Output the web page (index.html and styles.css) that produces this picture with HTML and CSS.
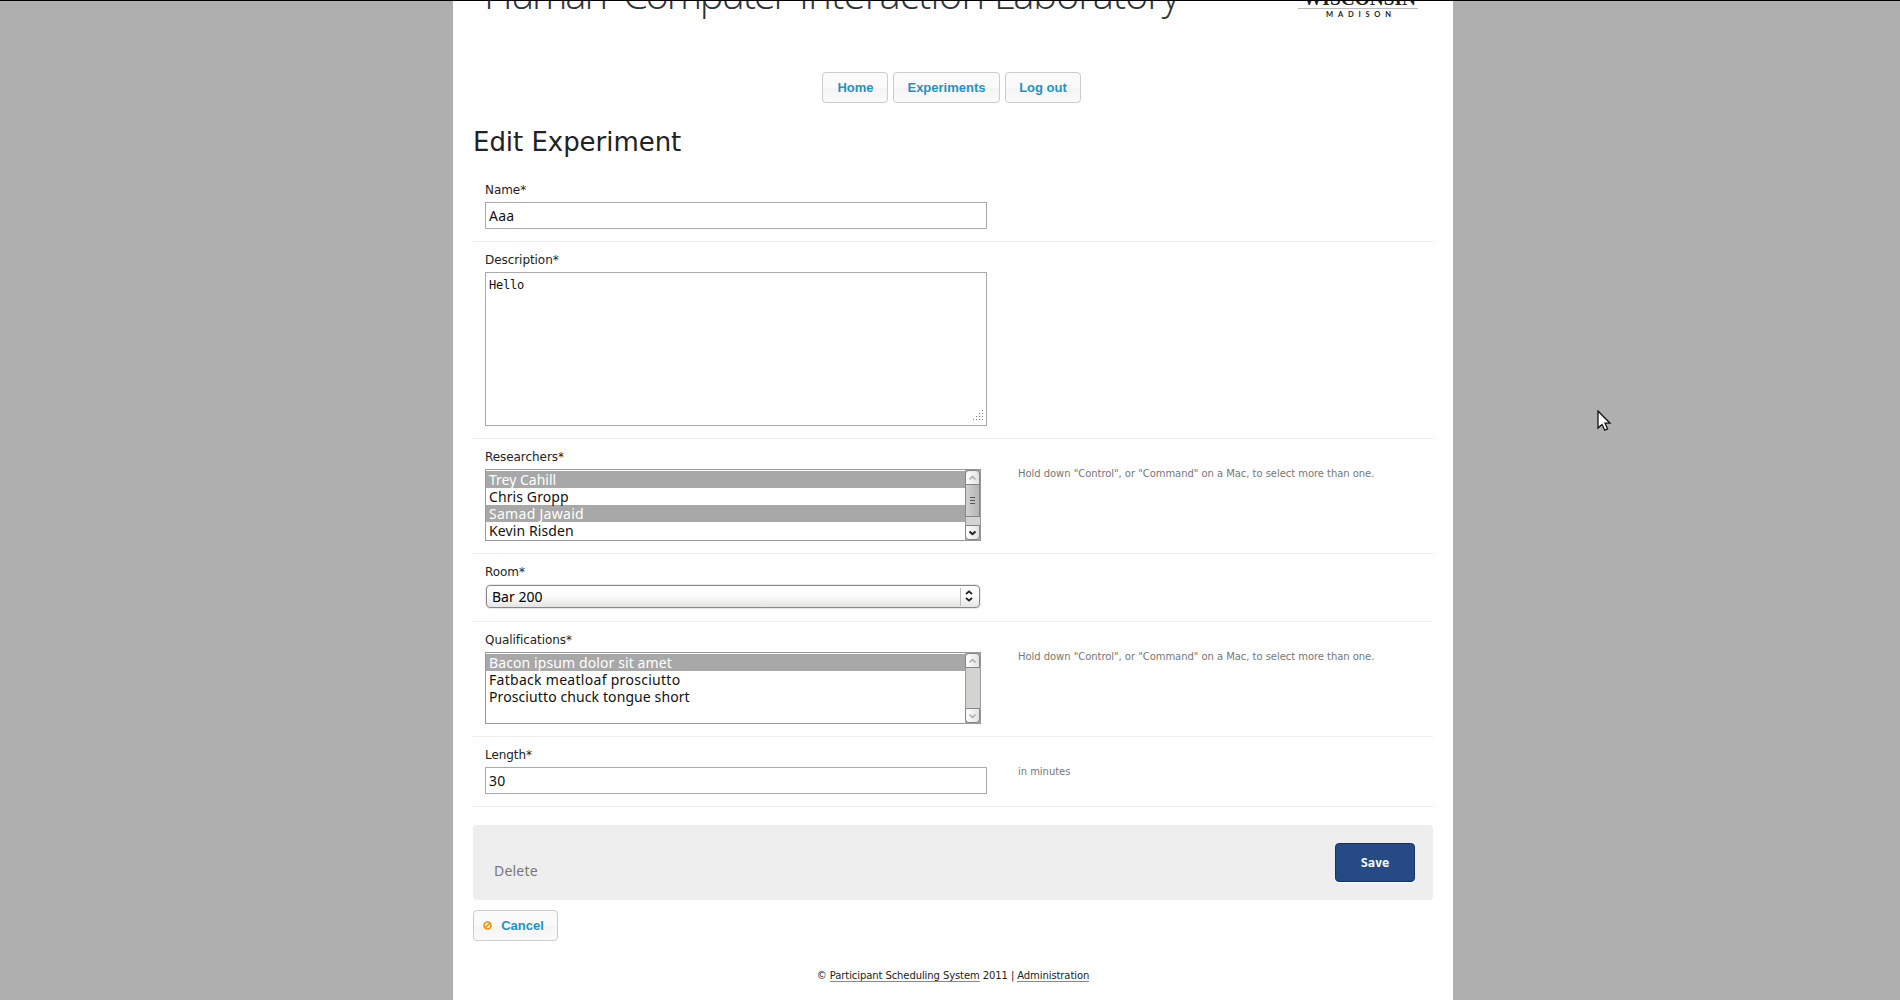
FILE: index.html
```html
<!DOCTYPE html>
<html lang="en">
<head>
<meta charset="utf-8">
<title>Edit Experiment</title>
<link rel="stylesheet" href="styles.css">
</head>
<body>
<div class="page">
  <header class="masthead">
    <div class="site-title"><svg width="720" height="74"><text y="57"><tspan x="11" textLength="124" lengthAdjust="spacing">Human</tspan> <tspan x="150" textLength="166" lengthAdjust="spacing">Computer</tspan> <tspan x="326" textLength="186" lengthAdjust="spacing">Interaction</tspan> <tspan x="521" textLength="186" lengthAdjust="spacing">Laboratory</tspan></text></svg></div>
    <div class="crest">
      <svg width="124" height="70">
        <text class="crest-name" x="6" y="53" textLength="113" lengthAdjust="spacingAndGlyphs">WISCONSIN</text>
        <path d="M1 56.5H121" stroke="#bbb"/>
        <text class="crest-city" x="29" y="65" textLength="65" lengthAdjust="spacing">MADISON</text>
      </svg>
    </div>
  </header>
  <nav class="nav">
    <a class="button home">Home</a>
    <a class="button experiments">Experiments</a>
    <a class="button logout">Log out</a>
  </nav>
  <main class="content">
    <h1 class="heading">Edit Experiment</h1>
    <form class="form">
      <div class="row row-name">
        <div class="field"><label class="label">Name*</label><div class="input">Aaa</div></div>
      </div>
      <div class="row row-description">
        <div class="field"><label class="label">Description*</label>
          <div class="textarea">Hello
            <svg class="grip" width="10" height="10" fill="#777"><path d="M9 0h1v1h-1zM6 3h1v1h-1zM9 3h1v1h-1zM3 6h1v1h-1zM6 6h1v1h-1zM9 6h1v1h-1zM0 9h1v1h-1zM3 9h1v1h-1zM6 9h1v1h-1zM9 9h1v1h-1z"/></svg>
          </div>
        </div>
      </div>
      <div class="row row-list">
        <div class="field"><label class="label">Researchers*</label>
          <div class="listbox">
            <ul class="options">
              <li class="option selected">Trey Cahill</li>
              <li class="option loose">Chris Gropp</li>
              <li class="option selected looser">Samad Jawaid</li>
              <li class="option loose">Kevin Risden</li>
            </ul>
            <div class="scrollbar">
              <div class="arrow up"><svg width="9" height="6" fill="none" stroke="#aaa" stroke-width="1.5"><path d="M1.5 4.5L4.5 1.5L7.5 4.5"/></svg></div>
              <div class="thumb"><i></i><i></i><i></i></div>
              <div class="track"></div>
              <div class="arrow down"><svg width="9" height="6" fill="none" stroke="#222" stroke-width="2"><path d="M1.5 1.5L4.5 4.2L7.5 1.5"/></svg></div>
            </div>
          </div>
        </div>
        <p class="hint">Hold down "Control", or "Command" on a Mac, to select more than one.</p>
      </div>
      <div class="row row-room">
        <div class="field"><label class="label">Room*</label>
          <div class="dropdown"><span class="dropdown-value">Bar 200</span>
            <span class="dropdown-arrows"><svg width="8" height="12" fill="none" stroke="#222" stroke-width="1.8"><path d="M1 4L4 1.4L7 4M1 8L4 10.6L7 8"/></svg></span>
          </div>
        </div>
      </div>
      <div class="row row-list">
        <div class="field"><label class="label">Qualifications*</label>
          <div class="listbox">
            <ul class="options">
              <li class="option selected loose">Bacon ipsum dolor sit amet</li>
              <li class="option looser">Fatback meatloaf prosciutto</li>
              <li class="option loose">Prosciutto chuck tongue short</li>
            </ul>
            <div class="scrollbar">
              <div class="arrow up"><svg width="9" height="6" fill="none" stroke="#aaa" stroke-width="1.5"><path d="M1.5 4.5L4.5 1.5L7.5 4.5"/></svg></div>
              <div class="track"></div>
              <div class="arrow down"><svg width="9" height="6" fill="none" stroke="#aaa" stroke-width="1.5"><path d="M1.5 1.5L4.5 4.5L7.5 1.5"/></svg></div>
            </div>
          </div>
        </div>
        <p class="hint">Hold down "Control", or "Command" on a Mac, to select more than one.</p>
      </div>
      <div class="row row-length">
        <div class="field"><label class="label">Length*</label><div class="input">30</div></div>
        <p class="hint">in minutes</p>
      </div>
      <div class="actions">
        <a class="delete">Delete</a>
        <button class="save" type="button">Save</button>
      </div>
    </form>
    <a class="button cancel"><svg width="9" height="9" fill="none" stroke="#ef8c08" stroke-width="1.6"><circle cx="4.5" cy="4.5" r="3.5"/><path d="M2.3 6.7L6.7 2.3"/></svg>Cancel</a>
  </main>
  <footer class="footer">© <a>Participant Scheduling System</a> 2011 | <a>Administration</a></footer>
</div>
<svg class="pointer" width="16" height="22"><path d="M1 1V18L5 14.5L7.8 20.2L10.6 19L8 13.2H13Z" fill="#fff" stroke="#111" stroke-width="1.3"/></svg>
</body>
</html>
```
FILE: styles.css
```css
* { box-sizing: border-box; }
html, body { height: 100%; }
body {
  margin: 0;
  overflow: hidden;
  background: #afafaf;
  border-top: 1px solid #000;
  color: #222;
  font-family: "DejaVu Sans", sans-serif;
  font-size: 12px;
}
.page { width: 1000px; height: 999px; margin-left: 453px; background: #fff; padding: 0 20px; }

.masthead { height: 71px; overflow: hidden; display: flex; }
.site-title, .crest { margin-top: -49px; }
.site-title { width: 824px; }
.site-title svg text { font: 300 40px "Open Sans", sans-serif; fill: #2d3338; }
.crest-name { font: bold 22px "Liberation Serif", serif; fill: #222; }
.crest-city { font: bold 7.5px Lato, sans-serif; fill: #222; }

.nav { display: flex; justify-content: center; gap: 5px; padding-right: 3px; }
.button {
  display: flex;
  align-items: center;
  justify-content: center;
  height: 31px;
  border: 1px solid #ccc;
  border-radius: 4px;
  background: linear-gradient(#fafafa 0 50%, #f4f4f4 51%, #fafafa 100%);
  color: #1c94c4;
  font: bold 13px "Liberation Sans", Arial, sans-serif;
}
.home { width: 66px; padding-left: 1px; }
.experiments { width: 107px; }
.logout { width: 76px; }

.heading { margin: 0; height: 69px; padding-top: 23px; font-size: 26px; line-height: 32px; font-weight: normal; letter-spacing: -0.04px; white-space: nowrap; }
.form { margin: 0; }
.row { display: flex; border-bottom: 1px solid #eee; padding-left: 12px; }
.row-name { height: 70px; }
.row-description { height: 197px; }
.row-list { height: 115px; }
.row-room { height: 68px; }
.row-length { height: 70px; }
.field { width: 533px; padding-top: 10px; }
.label { display: block; height: 20px; line-height: 17px; letter-spacing: -0.06px; }
.input, .options, .dropdown, .delete { font-family: "Noto Sans", sans-serif; font-size: 14px; }
.input, .textarea { width: 502px; border: 1px solid #aaa; color: #111; }
.input { height: 27px; padding: 0 3px; line-height: 25px; letter-spacing: 0.2px; }
.textarea { position: relative; height: 154px; padding: 4px 3px; font: 12px/16px "DejaVu Sans Mono", monospace; letter-spacing: -0.22px; }
.grip { position: absolute; right: 3px; bottom: 5px; }
.listbox { display: flex; width: 496px; height: 72px; border: 1px solid #999; }
.options { flex: 1; list-style: none; margin: 0; padding: 1px 0 0; color: #111; }
.option { height: 17px; padding-left: 3px; line-height: 17px; white-space: nowrap; }
.loose { letter-spacing: 0.1px; }
.looser { letter-spacing: 0.29px; }
.selected { background: #a8a8a8; color: #fff; }
.scrollbar { width: 15px; display: flex; flex-direction: column; background: #aaa; }
.arrow, .thumb { border: 1px solid #858585; display: flex; align-items: center; justify-content: center; background: linear-gradient(90deg, #fff, #e2e2e0); }
.arrow { height: 15px; }
.up { border-radius: 4px 4px 0 0; }
.down { border-radius: 0 0 4px 4px; }
.thumb { height: 33px; margin-top: -1px; padding-bottom: 1px; flex-direction: column; gap: 2px; background: linear-gradient(90deg, #d2d2d2, #b4b4b4); }
.thumb i { width: 5px; height: 1px; background: #555; }
.track { flex: 1; background: #d4d3d1; border-left: 1px solid #999; }
.dropdown { display: flex; align-items: center; width: 494px; height: 23px; margin: 1px 0 0 1px; border: 1px solid #888; border-radius: 4px; background: linear-gradient(#fff, #fcfcfc 45%, #e5e5e3); box-shadow: 0 0 1px 1px #e8e8e8; color: #000; }
.dropdown-value { flex: 1; padding-left: 5px; }
.dropdown-arrows { display: flex; align-items: center; height: 18px; width: 19px; padding-left: 4px; border-left: 1px solid #bbb; }
.dropdown-arrows svg { margin-top: -1px; }
.hint { margin: 0; padding-top: 27px; color: #777; font-size: 10px; line-height: 16px; letter-spacing: -0.045px; white-space: nowrap; }

.actions { display: flex; justify-content: space-between; height: 75px; margin-top: 18px; padding: 18px 18px 0 21px; border-radius: 4px; background: #eee; }
.delete { color: #777; padding-top: 18px; line-height: 19px; letter-spacing: 0.2px; }
.save { width: 80px; height: 39px; padding: 0; border: 1px solid #18325e; border-radius: 4px; background: #264a85; color: #fff; font: bold 12px "DejaVu Sans Mono", monospace; letter-spacing: -0.1px; box-shadow: 0 1px 0 #fff; }
.cancel { width: 85px; margin-top: 10px; padding-right: 4px; gap: 9px; }
.footer { margin-top: 27px; line-height: 16px; text-align: center; font-size: 10px; letter-spacing: -0.09px; }
.footer a { border-bottom: 1px solid #888; }
.pointer { position: absolute; left: 1597px; top: 410px; }
```
